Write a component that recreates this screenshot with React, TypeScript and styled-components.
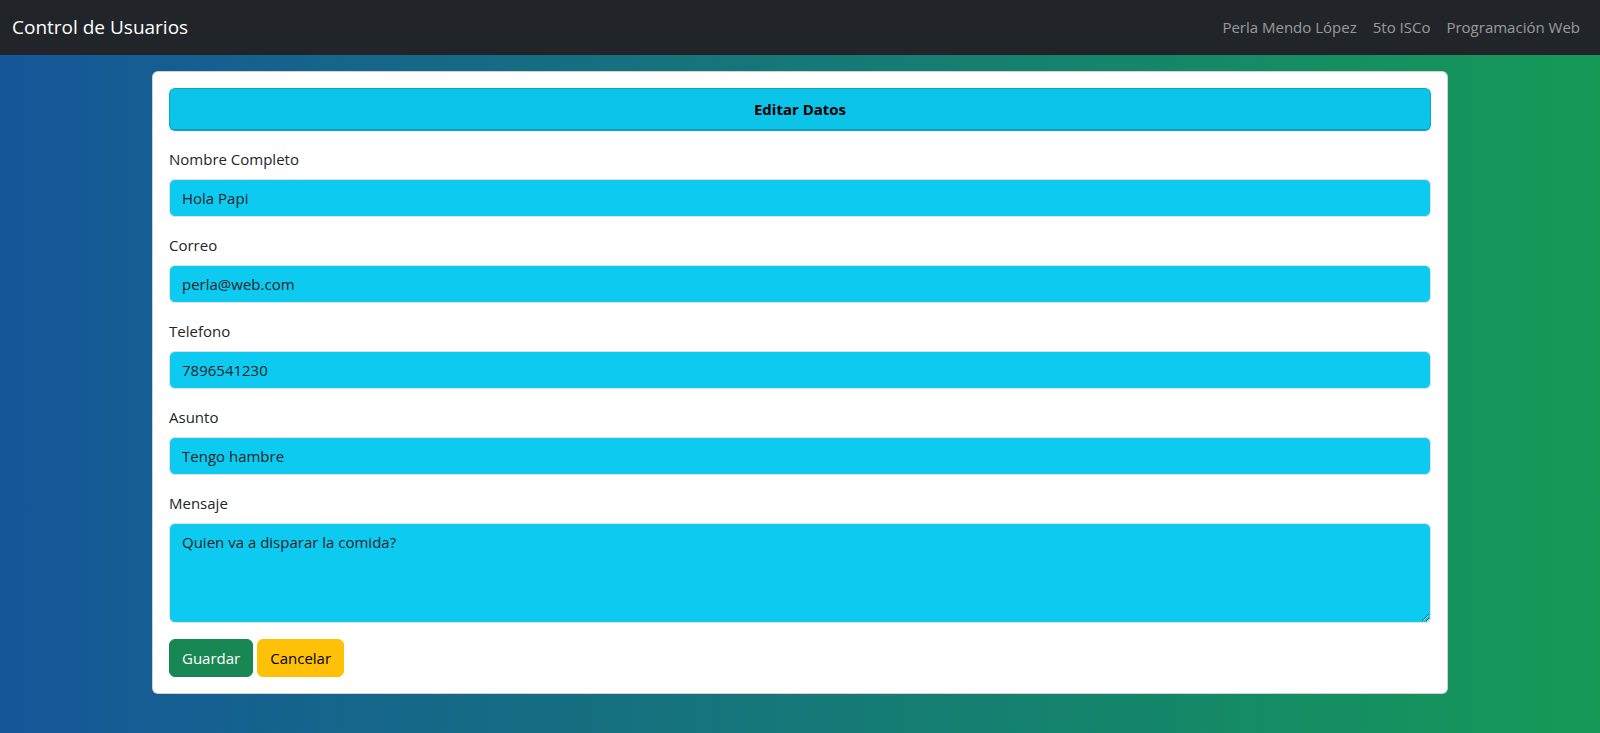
import React from "react";
import styled, { createGlobalStyle, css } from "styled-components";

const GlobalStyle = createGlobalStyle`
  *, *::before, *::after { box-sizing: border-box; }
  body {
    margin: 0;
    min-height: 100vh;
    font-family: "Open Sans", "Noto Sans", sans-serif;
    font-size: 15px;
    line-height: 24px;
    color: #212529;
    background: linear-gradient(to right, #155799, #159957) fixed;
  }
`;

const Navbar = styled.nav`
  display: flex;
  flex-wrap: wrap;
  align-items: center;
  justify-content: space-between;
  min-height: 55px;
  padding: 0 12px 2px;
  background: #212529;
`;

const Brand = styled.a`
  font-size: 19px;
  line-height: 30px;
  color: #fff;
  text-decoration: none;
`;

const NavList = styled.ul`
  display: flex;
  margin: 0;
  padding: 0;
  list-style: none;
`;

const NavLink = styled.a`
  display: block;
  padding: 8px;
  color: rgba(255, 255, 255, 0.55);
  text-decoration: none;
`;

const Container = styled.main`
  max-width: 1320px;
  margin: 16px auto;
  padding: 0 12px;
`;

const Card = styled.section`
  padding: 16px;
  border: 1px solid rgba(0, 0, 0, 0.175);
  border-radius: 6px;
  background: #fff;
`;

const TitleCard = styled.header`
  margin-bottom: 16px;
  border: 1px solid rgba(0, 0, 0, 0.175);
  border-radius: 6px;
  background: #0dcaf0;
  overflow: hidden;
`;

const Title = styled.h1`
  margin: 0;
  padding: 8px 16px;
  border-bottom: 1px solid rgba(0, 0, 0, 0.175);
  background: rgba(0, 0, 0, 0.03);
  color: #000;
  font-size: 15px;
  line-height: 24px;
  font-weight: 700;
  text-align: center;
`;

const Field = styled.div`
  display: flex;
  flex-direction: column;
  gap: 8px;
  margin-bottom: 16px;
`;

const control = css`
  display: block;
  width: 100%;
  padding: 6px 12px;
  border: 1px solid #dee2e6;
  border-radius: 6px;
  background: #0dcaf0;
  color: #212529;
  font: inherit;
  outline: none;
`;

const Input = styled.input`
  ${control}
  height: 38px;
`;

const TextArea = styled.textarea`
  ${control}
  height: 100px;
  resize: vertical;
`;

const Actions = styled.div`
  display: flex;
  gap: 4px;
`;

const Button = styled.button<{ $bg: string; $fg: string }>`
  padding: 6px 12px;
  border: 1px solid ${(p) => p.$bg};
  border-radius: 6px;
  background: ${(p) => p.$bg};
  color: ${(p) => p.$fg};
  font: inherit;
  cursor: pointer;
`;

const links = ["Perla Mendo López", "5to ISCo", "Programación Web"];

const fields = [
  { id: "nombre", label: "Nombre Completo", type: "text", value: "Hola Papi" },
  { id: "correo", label: "Correo", type: "email", value: "perla@web.com" },
  { id: "telefono", label: "Telefono", type: "tel", value: "7896541230" },
  { id: "asunto", label: "Asunto", type: "text", value: "Tengo hambre" },
];

export default function App() {
  return (
    <>
      <GlobalStyle />
      <Navbar>
        <Brand href="#">Control de Usuarios</Brand>
        <NavList>
          {links.map((text) => (
            <li key={text}>
              <NavLink href="#">{text}</NavLink>
            </li>
          ))}
        </NavList>
      </Navbar>
      <Container>
        <Card>
          <TitleCard>
            <Title>Editar Datos</Title>
          </TitleCard>
          <form onSubmit={(e) => e.preventDefault()}>
            {fields.map((f) => (
              <Field key={f.id}>
                <label htmlFor={f.id}>{f.label}</label>
                <Input id={f.id} name={f.id} type={f.type} defaultValue={f.value} />
              </Field>
            ))}
            <Field>
              <label htmlFor="mensaje">Mensaje</label>
              <TextArea id="mensaje" name="mensaje" defaultValue="Quien va a disparar la comida?" />
            </Field>
            <Actions>
              <Button type="submit" $bg="#198754" $fg="#fff">Guardar</Button>
              <Button type="button" $bg="#ffc107" $fg="#000">Cancelar</Button>
            </Actions>
          </form>
        </Card>
      </Container>
    </>
  );
}
